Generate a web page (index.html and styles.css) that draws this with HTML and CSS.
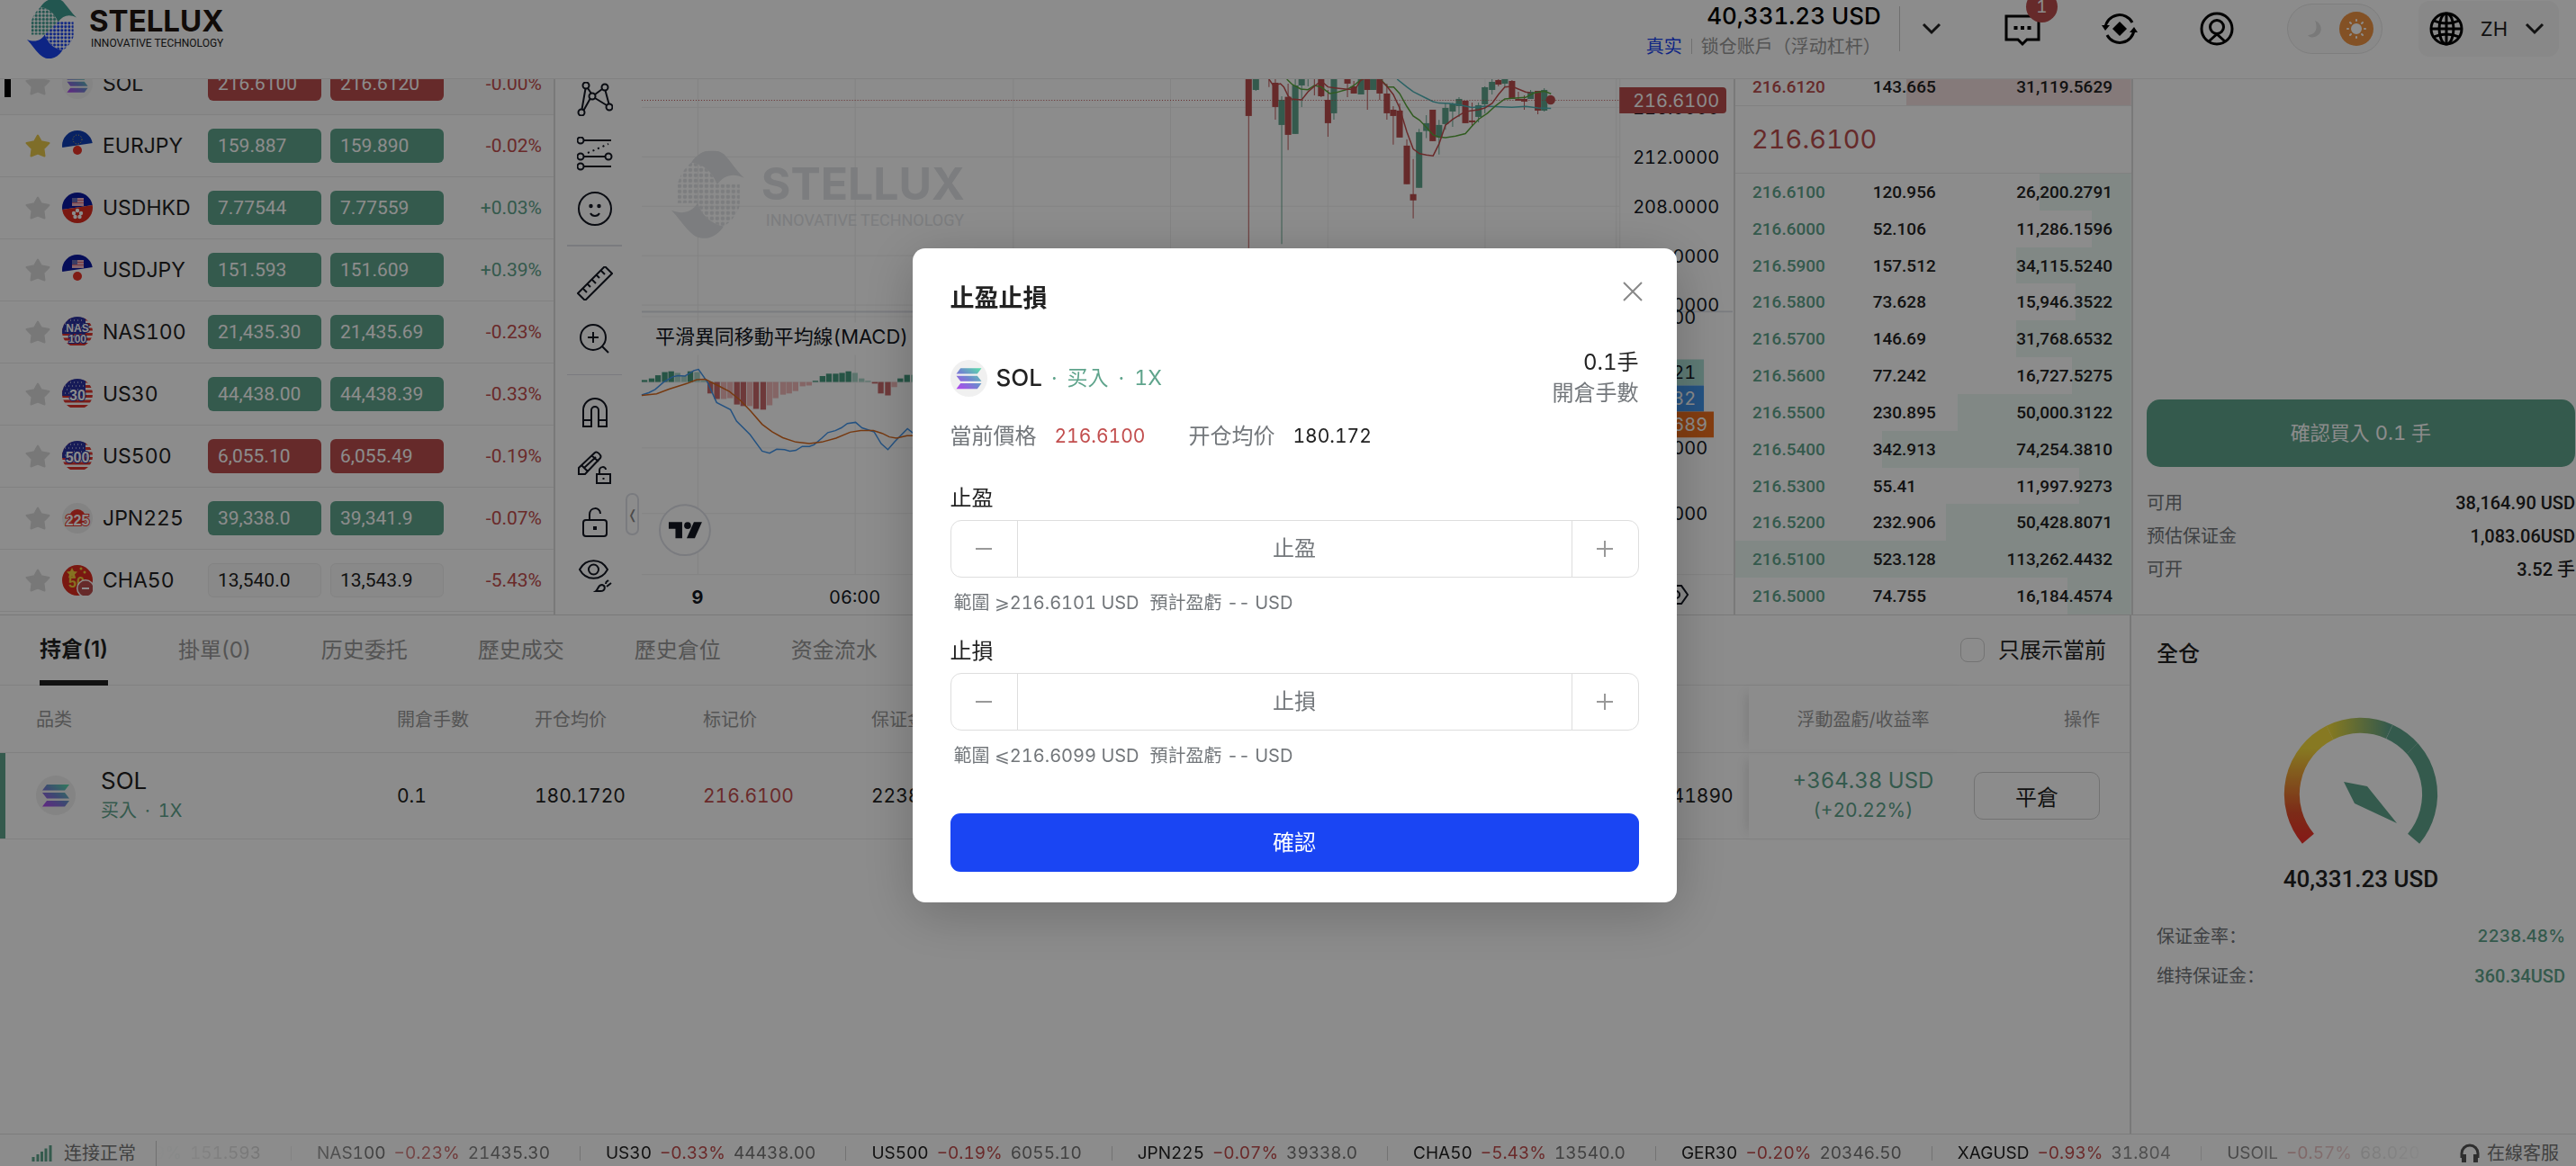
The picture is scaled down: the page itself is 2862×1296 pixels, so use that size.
FILE: index.html
```html
<!DOCTYPE html>
<html lang="zh-TW">
<head>
  <meta charset="UTF-8" />
  <meta name="viewport" content="width=device-width, initial-scale=1.0"/>
  <title>Stellux</title>
  <link rel="stylesheet" href="styles.css">
</head>
<body>

  <!-- Shared icons -->
  <svg class="sprite" aria-hidden="true">
    <defs>
      <linearGradient id="solGradient" x1="0" y1="1" x2="1" y2="0">
        <stop offset="0" stop-color="#b443f0"/>
        <stop offset="0.5" stop-color="#6f86cf"/>
        <stop offset="1" stop-color="#58e0a8"/>
      </linearGradient>
      <pattern id="dots" width="6" height="6" patternUnits="userSpaceOnUse">
        <circle cx="3" cy="3" r="2.300" fill="#fff"/>
      </pattern>
      <mask id="dotMask" maskUnits="userSpaceOnUse" x="0" y="0" width="81" height="97">
        <path d="M0 0h81v97H0z" fill="url(#dots)"/>
      </mask>
      <clipPath id="round"><circle cx="17" cy="17" r="17"/></clipPath>
    </defs>
    <symbol id="logo" viewBox="0 0 81 97">
      <g class="logo-top">
        <path d="M22 13C32-3 50-4 59 4c8 9 14 19 22 26-13-6-22-3-30 7C46 25 36 14 22 13z"/>
        <path d="M22 13c14 1 24 12 29 24L29 58H7V36c3-10 8-17 15-23z" mask="url(#dotMask)"/>
      </g>
      <g class="logo-bottom">
        <path d="M0 66c13 5 23 2 29-8 5 14 15 23 29 26-9 14-24 17-34 9C15 86 8 74 0 66z"/>
        <path d="M58 84C44 81 34 72 29 58l22-21h25v24c-3 10-10 18-18 23z" mask="url(#dotMask)"/>
      </g>
    </symbol>
    <symbol id="star" viewBox="0 0 28 26">
      <path d="M14 1.500 17.800 8.300 26.500 10 20.400 16.200 21.500 24.500 14 21.500 6.500 24.500 7.600 16.200 1.500 10 10.200 8.300Z" fill="currentColor" stroke="currentColor" stroke-width="2" stroke-linejoin="round"/>
    </symbol>
    <symbol id="sol" viewBox="0 0 44 44">
      <circle cx="22" cy="22" r="22" fill="#f0f0f0"/>
      <path d="M12 10h25l-5 6.500H7zM7 19h25l5 6.500H12zM12 28h25l-5 6.500H7z" fill="url(#solGradient)"/>
    </symbol>
    <symbol id="usa" viewBox="0 0 34 34">
      <g clip-path="url(#round)">
        <path d="M0 0h34v34H0z" fill="#fff"/>
        <path d="M0 3h34M0 8.500h34M0 14h34M0 19.500h34M0 25h34M0 30.500h34" stroke="#e0352f" stroke-width="2.800"/>
        <path d="M0 0h26v19H0z" fill="#2a32a0"/>
        <path d="M5 4h20M3 8h22M5 12h20M3 16h22" stroke="#fff" stroke-width="1" stroke-dasharray="1 3"/>
      </g>
    </symbol>
    <symbol id="chevron" viewBox="0 0 22 14">
      <path d="M2 2l9 9 9-9" fill="none" stroke="currentColor" stroke-width="3"/>
    </symbol>
  </svg>

  <div class="app">

    <header class="header">
      <a class="brand" href="#">
        <svg class="brand-logo"><use href="#logo"/></svg>
        <span class="brand-text">
          <span class="brand-name">STELLUX</span>
          <span class="brand-tag">INNOVATIVE TECHNOLOGY</span>
        </span>
      </a>

      <div class="account">
        <div class="account-total">40,331.23 USD</div>
        <div class="account-type"><span class="real">真实</span><i></i><span>锁仓账户（浮动杠杆）</span></div>
      </div>
      <button class="account-toggle" aria-label="切換帳戶"><svg width="22" height="14"><use href="#chevron"/></svg></button>

      <button class="icon-btn message-btn" aria-label="訊息">
        <svg width="40" height="36" viewBox="0 0 40 36" fill="none" stroke="#000" stroke-width="3"><path d="M2 2h36v26H25l-5 5-5-5H2z"/><path d="M10.500 15h4M18 15h4M25.500 15h4" stroke-width="4"/></svg>
        <span class="badge">1</span>
      </button>
      <button class="icon-btn" aria-label="兌換">
        <svg width="40" height="40" viewBox="0 0 40 40" fill="none" stroke="#000" stroke-width="3"><path d="M4 19A16 16 0 0 1 34 13M36 21A16 16 0 0 1 6 27"/><path d="M0 16h9l-5 6zM40 24h-9l5-6zM20 12l8 8-8 8-8-8z" fill="#000" stroke="none"/></svg>
      </button>
      <button class="icon-btn" aria-label="個人中心">
        <svg width="40" height="40" viewBox="0 0 40 40" fill="none" stroke="#000" stroke-width="3"><circle cx="20" cy="20" r="17"/><circle cx="20" cy="18" r="7.500"/><path d="M11 34l9-8 9 8"/></svg>
      </button>
      <button class="theme-switch" aria-label="主題">
        <svg class="moon" width="18" height="20" viewBox="0 0 18 20"><path d="M9 1c8 3 10 14 0 18-4 1-7 0-8-2 8 0 12-7 8-16z" fill="#dcdcdc"/></svg>
        <span class="sun"><svg width="24" height="24" viewBox="0 0 24 24" stroke="#fff" stroke-width="2" stroke-linecap="round"><circle cx="12" cy="12" r="5" fill="#fff"/><path d="M12 2v1M12 21v1M2 12h1M21 12h1M5 5l1 1M18 18l1 1M19 5l-1 1M6 18l-1 1"/></svg></span>
      </button>
      <button class="lang">
        <svg width="38" height="38" viewBox="0 0 38 38" fill="none" stroke="#000" stroke-width="3"><circle cx="19" cy="19" r="17"/><ellipse cx="19" cy="19" rx="8" ry="17"/><path d="M2 19h34M5 10c9 4 19 4 28 0M5 28c9-4 19-4 28 0M19 2v34"/></svg>
        ZH
        <svg width="22" height="14"><use href="#chevron"/></svg>
      </button>
    </header>

    <main class="workspace">

      <!-- Watch list -->
      <section class="watchlist">
        <table>
          <colgroup><col class="w-symbol"><col class="w-price"><col class="w-price"><col></colgroup>
          <tbody>
            <tr class="selected">
              <td><div class="symbol"><svg class="star"><use href="#star"/></svg><svg class="flag"><use href="#sol"/></svg>SOL</div></td>
              <td><span class="price down">216.6100</span></td><td><span class="price down">216.6120</span></td><td class="change red">-0.00%</td>
            </tr>
            <tr>
              <td><div class="symbol"><svg class="star on"><use href="#star"/></svg><svg class="flag" viewBox="0 0 34 34"><g clip-path="url(#round)"><path d="M0 0h34v14L0 19z" fill="#103fb5"/><circle cx="17" cy="10" r="5" fill="none" stroke="#e8c440" stroke-width="1" stroke-dasharray="1 2"/><circle cx="17" cy="22" r="5" fill="#e93427"/></g></svg>EURJPY</div></td>
              <td><span class="price up">159.887</span></td><td><span class="price up">159.890</span></td><td class="change red">-0.02%</td>
            </tr>
            <tr>
              <td><div class="symbol"><svg class="star"><use href="#star"/></svg><svg class="flag" viewBox="0 0 34 34"><g clip-path="url(#round)"><path d="M0 0h34v14L0 19z" fill="#0a18a0"/><path d="M0 19l34-5v20H0z" fill="#de2d20"/><path d="M11 6h13v9H11z" fill="#f3b9c6"/><path d="M11 8.500h13M11 11.500h13" stroke="#e06a78" stroke-width="1"/><path d="M11 6h6v5h-6z" fill="#6a6fb8"/><g fill="#fff"><circle cx="17" cy="20" r="2.200"/><circle cx="21" cy="23" r="2.200"/><circle cx="19.500" cy="27" r="2.200"/><circle cx="14.500" cy="27" r="2.200"/><circle cx="13" cy="23" r="2.200"/></g></g></svg>USDHKD</div></td>
              <td><span class="price up">7.77544</span></td><td><span class="price up">7.77559</span></td><td class="change green">+0.03%</td>
            </tr>
            <tr>
              <td><div class="symbol"><svg class="star"><use href="#star"/></svg><svg class="flag" viewBox="0 0 34 34"><g clip-path="url(#round)"><path d="M0 0h34v14L0 19z" fill="#0a18a0"/><path d="M11 6h13v9H11z" fill="#f3b9c6"/><path d="M11 8.500h13M11 11.500h13" stroke="#e06a78" stroke-width="1"/><path d="M11 6h6v5h-6z" fill="#6a6fb8"/><circle cx="17" cy="24" r="5" fill="#e93427"/></g></svg>USDJPY</div></td>
              <td><span class="price up">151.593</span></td><td><span class="price up">151.609</span></td><td class="change green">+0.39%</td>
            </tr>
            <tr>
              <td><div class="symbol"><svg class="star"><use href="#star"/></svg><svg class="flag" viewBox="0 0 34 34"><use href="#usa"/><g class="flag-text"><text x="17" y="17">NAS</text><text x="17" y="29">100</text></g></svg>NAS100</div></td>
              <td><span class="price up">21,435.30</span></td><td><span class="price up">21,435.69</span></td><td class="change red">-0.23%</td>
            </tr>
            <tr>
              <td><div class="symbol"><svg class="star"><use href="#star"/></svg><svg class="flag" viewBox="0 0 34 34"><use href="#usa"/><g class="flag-text big"><text x="17" y="24">30</text></g></svg>US30</div></td>
              <td><span class="price up">44,438.00</span></td><td><span class="price up">44,438.39</span></td><td class="change red">-0.33%</td>
            </tr>
            <tr>
              <td><div class="symbol"><svg class="star"><use href="#star"/></svg><svg class="flag" viewBox="0 0 34 34"><use href="#usa"/><g class="flag-text big"><text x="17" y="24">500</text></g></svg>US500</div></td>
              <td><span class="price down">6,055.10</span></td><td><span class="price down">6,055.49</span></td><td class="change red">-0.19%</td>
            </tr>
            <tr>
              <td><div class="symbol"><svg class="star"><use href="#star"/></svg><svg class="flag" viewBox="0 0 34 34"><circle cx="17" cy="17" r="17" fill="#efefef"/><circle cx="17" cy="16" r="9" fill="#e8352a"/><g class="flag-text big jpn"><text x="17" y="25">225</text></g></svg>JPN225</div></td>
              <td><span class="price up">39,338.0</span></td><td><span class="price up">39,341.9</span></td><td class="change red">-0.07%</td>
            </tr>
            <tr>
              <td><div class="symbol"><svg class="star"><use href="#star"/></svg><svg class="flag" viewBox="0 0 34 34"><circle cx="17" cy="17" r="17" fill="#de2d20"/><path d="M11 3l2 4 4 .5-3 3 1 4-4-2-4 2 1-4-3-3 4-.5z" fill="#f5d03c"/><g fill="#f5d03c"><circle cx="21" cy="4" r="1.500"/><circle cx="25" cy="8" r="1.500"/></g><g class="flag-text big chn"><text x="16" y="25">50</text></g><circle cx="26" cy="26" r="10" fill="#fff"/><circle cx="26" cy="26" r="8.500" fill="#ba4e4e"/><path d="M22 26h8" stroke="#fff" stroke-width="2"/></svg>CHA50</div></td>
              <td><span class="price flat">13,540.0</span></td><td><span class="price flat">13,543.9</span></td><td class="change red">-5.43%</td>
            </tr>
          </tbody>
        </table>
      </section>

      <!-- Chart -->
      <section class="chart">
        <div class="toolbar">
          <button aria-label="形態"><svg viewBox="0 0 40 38"><circle cx="10" cy="4" r="3.500"/><circle cx="31" cy="6" r="3.500"/><circle cx="17" cy="16" r="3.500"/><circle cx="5" cy="34" r="3.500"/><circle cx="36" cy="28" r="3.500"/><path d="M9.500 7.500 5.500 30.500M12 7l4 6M28 8l-8 6M31.500 9.500 35.500 24.500M20 18l13 8M14.500 19 7.500 31.500"/></svg></button>
          <button aria-label="斐波那契"><svg viewBox="0 0 40 38"><circle cx="4" cy="4" r="3.500"/><circle cx="4" cy="22" r="3.500"/><circle cx="35" cy="22" r="3.500"/><circle cx="4" cy="33" r="3.500"/><path d="M8 4h30M8 22h23M8 33h30"/><path d="M12 18 35 8" stroke-dasharray="2 4"/></svg></button>
          <button aria-label="表情"><svg viewBox="0 0 40 38"><circle cx="20" cy="19" r="18"/><path d="M15 24c2 4 8 4 10 0"/><circle cx="15.500" cy="16" r="1.200"/><circle cx="24.500" cy="16" r="1.200"/></svg></button>
          <hr>
          <button aria-label="測量"><svg viewBox="0 0 40 38"><path d="M1 30 31 0l8 8L9 38zM7 25l4 4M12 20l3 3M17 15l4 4M22 10l3 3M27 5l4 4"/></svg></button>
          <button aria-label="放大"><svg viewBox="0 0 40 38"><circle cx="18" cy="18" r="14"/><path d="M18 12v12M12 18h12M28 28l7 7"/></svg></button>
          <hr class="thin">
          <button aria-label="磁鐵"><svg viewBox="0 0 40 38"><path d="M7 35V17a13 13 0 0 1 26 0v18h-9V17a4 4 0 0 0-8 0v18zM7 28h9M24 28h9"/></svg></button>
          <button aria-label="鎖定繪圖"><svg viewBox="0 0 40 38"><path d="M2 20 20 3c2-2 8 3 6 6L9 27H2zM5 17l7 7M16 6l8 7M8 20 21 8M22 27h15v10H22zM25 27v-4c0-5 7-5 7-1M29.500 31v2"/></svg></button>
          <button aria-label="鎖定"><svg viewBox="0 0 40 38"><rect x="7" y="17" width="26" height="18" rx="3"/><path d="M14 17v-6c0-9 12-9 12-1"/><path d="M20 24v4" stroke-width="4"/></svg></button>
          <button aria-label="隱藏"><svg viewBox="0 0 40 38"><path d="M3 11C10-2 27-2 34 11 27 24 10 24 3 11z"/><circle cx="18.500" cy="11" r="5.500"/><path d="M21 35c3-2 2-7 7-7 4 1 4 7-2 7zM33 30l5-4M32 27c0-3 2-3 3-4" /></svg></button>
        </div>
        <button class="collapse" aria-label="收起">❬</button>

        <svg class="plot" viewBox="712 88 1214 596">
          <g class="grid">
            <path d="M774.500 88V639M949.500 88V639M1125.500 88V639M1300.500 88V639M1475.500 88V639M1650.500 88V639M1796.500 88V639"/>
            <path d="M712 119.500H1800M712 174.500H1800M712 229.500H1800M712 284.500H1800M712 339.500H1800M712 352.500H1800M712 425.500H1800M712 498.500H1800M712 571.500H1800M712 639.500H1926M1800.500 88V684"/>
          </g>
          <path d="M712 347H1926" stroke="#dfe1e8" stroke-width="2"/>

          <g class="watermark">
            <use href="#logo" x="745" y="168" width="81" height="97"/>
            <text x="845" y="222" class="wm-name">STELLUX</text>
            <text x="850" y="251" class="wm-tag">INNOVATIVE TECHNOLOGY</text>
          </g>

          <g id="candles" transform="translate(1200 0) scale(0.472 0.3333)"></g>
          <path d="M712 111.500H1800" stroke="#ba4e4e" stroke-dasharray="1 2"/>

          <path d="M725 359h285v36H725z" fill="#fff"/>
          <text x="727" y="383" class="study">平滑異同移動平均線(MACD)</text>
          <g id="macd" transform="translate(600 0) scale(0.3954 0.4401)"></g>

          <g class="tv">
            <circle cx="760" cy="590" r="28" fill="#fff" stroke="#dfe1e8" stroke-width="2"/>
            <path d="M742 581h15v18h-7.500v-10.500H742zM770 581h9l-8 18h-9z" fill="#131722"/>
            <circle cx="763" cy="585" r="3.800" fill="#131722"/>
          </g>

          <g>
            <text x="1815" y="127">216.0000</text>
            <text x="1815" y="182">212.0000</text>
            <text x="1815" y="237">208.0000</text>
            <text x="1815" y="292">204.0000</text>
            <text x="1815" y="346">200.0000</text>
            <path d="M1801 348h125v2h-125z" fill="#fff"/>
            <text x="1815" y="360">2.0000</text>
            <text x="1815" y="506">−2.0000</text>
            <text x="1815" y="579">−4.0000</text>
            <path d="M1800 97h115a4 4 0 0 1 4 4v21a4 4 0 0 1-4 4h-115z" fill="#ba4e4e"/>
            <text x="1815" y="119" class="light">216.6100</text>
            <path d="M1800 400h94v29h-94z" fill="#ace0d6"/>
            <text x="1815" y="422">0.2521</text>
            <path d="M1800 429h94v29h-94z" fill="#4396ec"/>
            <text x="1815" y="451" class="light">0.8632</text>
            <path d="M1800 458h105v29h-105z" fill="#f0701e"/>
            <text x="1815" y="480" class="light">−0.7689</text>
            <path d="M1857 652h12l7 10-7 10h-12l-7-10z" fill="none" stroke="#131722" stroke-width="2"/>
            <circle cx="1863" cy="662" r="4" fill="none" stroke="#131722" stroke-width="2"/>
          </g>
          <text x="774" y="672" class="mid strong">9</text>
          <text x="949" y="672" class="mid">06:00</text>
        </svg>
      </section>

      <!-- Order book -->
      <section class="book">
        <table class="asks"><tbody>
          <tr style="--depth:57%"><td>216.6120</td><td>143.665</td><td>31,119.5629</td></tr>
        </tbody></table>
        <div class="last-price">216.6100</div>
        <table class="bids"><tbody>
          <tr style="--depth:23%"><td>216.6100</td><td>120.956</td><td>26,200.2791</td></tr>
          <tr style="--depth:10%"><td>216.6000</td><td>52.106</td><td>11,286.1596</td></tr>
          <tr style="--depth:29%"><td>216.5900</td><td>157.512</td><td>34,115.5240</td></tr>
          <tr style="--depth:14%"><td>216.5800</td><td>73.628</td><td>15,946.3522</td></tr>
          <tr style="--depth:29%"><td>216.5700</td><td>146.69</td><td>31,768.6532</td></tr>
          <tr style="--depth:15%"><td>216.5600</td><td>77.242</td><td>16,727.5275</td></tr>
          <tr style="--depth:44%"><td>216.5500</td><td>230.895</td><td>50,000.3122</td></tr>
          <tr style="--depth:63%"><td>216.5400</td><td>342.913</td><td>74,254.3810</td></tr>
          <tr style="--depth:13%"><td>216.5300</td><td>55.41</td><td>11,997.9273</td></tr>
          <tr style="--depth:47%"><td>216.5200</td><td>232.906</td><td>50,428.8071</td></tr>
          <tr style="--depth:100%"><td>216.5100</td><td>523.128</td><td>113,262.4432</td></tr>
          <tr style="--depth:16%"><td>216.5000</td><td>74.755</td><td>16,184.4574</td></tr>
        </tbody></table>
      </section>

      <!-- Order form -->
      <section class="order">
        <button class="buy-btn">確認買入 0.1 手</button>
        <dl lang="zh-CN">
          <div><dt>可用</dt><dd>38,164.90 USD</dd></div>
          <div><dt>预估保证金</dt><dd>1,083.06USD</dd></div>
          <div><dt>可开</dt><dd>3.52 手</dd></div>
        </dl>
      </section>
    </main>

    <div class="bottom">
      <section class="positions">
        <nav class="tabs">
          <a class="active" href="#">持倉(1)</a>
          <a href="#">掛單(0)</a>
          <a href="#">历史委托</a>
          <a href="#">歷史成交</a>
          <a href="#">歷史倉位</a>
          <a href="#">资金流水</a>
          <label class="only-current"><input type="checkbox">只展示當前</label>
        </nav>
        <table>
          <colgroup><col class="p-name"><col class="p-lots"><col class="p-num"><col class="p-num"><col><col class="p-id"><col class="p-pnl"><col class="p-action"></colgroup>
          <thead>
            <tr><th>品类</th><th>開倉手數</th><th>开仓均价</th><th>标记价</th><th>保证金率</th><th>訂單號</th><th class="pnl">浮動盈虧/收益率</th><th class="action">操作</th></tr>
          </thead>
          <tbody>
            <tr>
              <td><div class="position"><svg width="44" height="44"><use href="#sol"/></svg><div><b>SOL</b><small class="side green"><span>买入</span><span>·</span><span>1X</span></small></div></div></td>
              <td>0.1</td>
              <td>180.1720</td>
              <td class="red">216.6100</td>
              <td>2238.48%</td>
              <td>20250209141890</td>
              <td class="pnl green"><b>+364.38 USD</b><small>(+20.22%)</small></td>
              <td class="action"><button>平倉</button></td>
            </tr>
          </tbody>
        </table>
      </section>

      <section class="margin">
        <h2>全仓</h2>
        <svg class="gauge" viewBox="0 0 180 150">
          <defs>
            <linearGradient id="gaugeLow" x1="0" y1="1" x2="0" y2="0"><stop offset="0" stop-color="#f0322a"/><stop offset="0.25" stop-color="#e2502c"/><stop offset="0.85" stop-color="#f6dc3e"/></linearGradient>
            <linearGradient id="gaugeMid"><stop offset="0" stop-color="#f1dc3d"/><stop offset="1" stop-color="#5fa48c"/></linearGradient>
          </defs>
          <g fill="none" stroke-width="17">
            <path d="M31.400 139.200A76.500 76.500 0 0 1 55.600 21.400" stroke="url(#gaugeLow)"/>
            <path d="M55.600 21.400A76.500 76.500 0 0 1 121.600 20.200" stroke="url(#gaugeMid)"/>
            <path d="M121.600 20.200A76.500 76.500 0 0 1 148.600 139.200" stroke="#5fa48c"/>
            <path d="M118 28l8-16M142 44l12-12" stroke="#fff" stroke-width="1" opacity="0.2"/>
          </g>
          <path d="M71 76l26 5 33 41-47-22z" fill="#5fa48c"/>
        </svg>
        <div class="equity">40,331.23 USD</div>
        <dl lang="zh-CN">
          <div><dt>保证金率：</dt><dd class="rate">2238.48%</dd></div>
          <div><dt>维持保证金：</dt><dd>360.34USD</dd></div>
        </dl>
      </section>
    </div>

    <footer class="footer">
      <div class="status">
        <svg width="23" height="18" viewBox="0 0 23 18"><path d="M2 18v-5M7 18v-8M11.500 18V7M16 18V3.500M21 18V0" stroke="#5fa48c" stroke-width="3"/></svg>
        连接正常
      </div>
      <div class="ticker">
        <ul>
          <li><b>USDJPY</b><em class="up">+0.39%</em><span>151.593</span></li>
          <li><b>NAS100</b><em>−0.23%</em><span>21435.30</span></li>
          <li><b>US30</b><em>−0.33%</em><span>44438.00</span></li>
          <li><b>US500</b><em>−0.19%</em><span>6055.10</span></li>
          <li><b>JPN225</b><em>−0.07%</em><span>39338.0</span></li>
          <li><b>CHA50</b><em>−5.43%</em><span>13540.0</span></li>
          <li><b>GER30</b><em>−0.20%</em><span>20346.50</span></li>
          <li><b>XAGUSD</b><em>−0.93%</em><span>31.804</span></li>
          <li><b>USOIL</b><em>−0.57%</em><span>68.020</span></li>
        </ul>
      </div>
      <a class="service" href="#">
        <svg width="24" height="22" viewBox="0 0 24 22" fill="none" stroke="#555" stroke-width="3"><path d="M3 16v-5a9 9 0 0 1 18 0v5"/><path d="M5.500 12v9M18.500 12v9" stroke-width="5"/></svg>
        在線客服
      </a>
    </footer>
  </div>

  <!-- Take profit / stop loss -->
  <div class="overlay">
    <form class="modal" role="dialog" aria-labelledby="modalTitle">
      <div class="modal-head">
        <h1 id="modalTitle">止盈止損</h1>
        <button type="button" class="close" aria-label="關閉"><svg width="22" height="22" viewBox="0 0 22 22"><path d="M1 1l20 20M21 1L1 21" stroke="#888" stroke-width="2"/></svg></button>
      </div>
      <div class="modal-symbol">
        <svg width="41" height="41"><use href="#sol"/></svg>
        <b>SOL</b>
        <div class="side green"><span>·</span><span>买入</span><span>·</span><span>1X</span></div>
        <div class="lots"><span>0.1手</span><span class="muted">開倉手數</span></div>
      </div>
      <div class="modal-prices">
        <span class="muted">當前價格</span><span class="red">216.6100</span>
        <span class="muted second">开仓均价</span><span>180.172</span>
      </div>

      <label for="takeProfit">止盈</label>
      <div class="stepper">
        <button type="button" aria-label="減少"><svg width="18" height="18"><path d="M0 9h18" stroke="#999" stroke-width="2"/></svg></button>
        <input type="text" id="takeProfit" placeholder="止盈">
        <button type="button" aria-label="增加"><svg width="18" height="18"><path d="M0 9h18M9 0v18" stroke="#999" stroke-width="2"/></svg></button>
      </div>
      <p class="hint"><span>範圍 ⩾216.6101 USD</span><span>預計盈虧 -- USD</span></p>

      <label for="stopLoss">止損</label>
      <div class="stepper">
        <button type="button" aria-label="減少"><svg width="18" height="18"><path d="M0 9h18" stroke="#999" stroke-width="2"/></svg></button>
        <input type="text" id="stopLoss" placeholder="止損">
        <button type="button" aria-label="增加"><svg width="18" height="18"><path d="M0 9h18M9 0v18" stroke="#999" stroke-width="2"/></svg></button>
      </div>
      <p class="hint"><span>範圍 ⩽216.6099 USD</span><span>預計盈虧 -- USD</span></p>

      <button type="button" class="confirm">確認</button>
    </form>
  </div>

  <script src="script.js"></script>
</body>
</html>
```
FILE: styles.css
```css
* {
  margin: 0;
  padding: 0;
  box-sizing: border-box;
}

body {
  font-family: Inter, 'Noto Sans CJK SC', sans-serif;
  font-size: 22px;
  font-variant-numeric: tabular-nums;
  color: #222;
  background: #fff;
  overflow: hidden;
}

button,
input {
  font: inherit;
  color: inherit;
  background: none;
  border: none;
}

button {
  cursor: pointer;
}

a {
  color: inherit;
  text-decoration: none;
}

table {
  border-collapse: collapse;
  table-layout: fixed;
  width: 100%;
}

.sprite {
  position: absolute;
  width: 0;
  height: 0;
}

.red {
  color: #c24e4e;
}

.green {
  color: #5fa48c;
}

.muted {
  color: #73777b;
}

.app {
  display: flex;
  flex-direction: column;
  height: 100vh;
}

/* Header */

.header {
  display: flex;
  align-items: center;
  flex: none;
  height: 88px;
  padding: 0 19px 24px 30px;
  border-bottom: 1px solid #ececec;
}

.brand {
  display: flex;
  align-items: center;
  gap: 14px;
  margin-right: auto;
}

.brand-logo {
  width: 55px;
  height: 66px;
}

.logo-top {
  fill: var(--logo-top, #3f9d92);
}

.logo-bottom {
  fill: var(--logo-bottom, #1a44f0);
}

.brand-text {
  display: flex;
  flex-direction: column;
}

.brand-name {
  font-size: 33px;
  font-weight: 700;
  line-height: 32px;
  color: #201410;
}

.brand-tag {
  padding-left: 2px;
  font-family: Roboto, sans-serif;
  font-size: 12px;
  line-height: 18px;
}

.account {
  padding-top: 6px;
  text-align: right;
}

.account-total {
  font-size: 26px;
  font-weight: 500;
  line-height: 34px;
  color: #000;
}

.account-type {
  display: flex;
  align-items: center;
  justify-content: flex-end;
  font-size: 20px;
  line-height: 34px;
  color: #999;
}

.account-type i {
  width: 1px;
  height: 17px;
  margin: 0 10px;
  background: #ccc;
}

.account-type .real {
  color: #1a44f0;
}

.account-toggle {
  display: flex;
  margin: 0 70px 0 20px;
  padding: 18px 0 18px 24px;
  border-left: 1px solid #ccc;
}

.icon-btn {
  position: relative;
  display: flex;
  margin-right: 68px;
}

.message-btn {
  margin-top: 4px;
}

.badge {
  position: absolute;
  top: -26px;
  right: -19px;
  width: 35px;
  height: 35px;
  border-radius: 50%;
  background: #ba4e4e;
  color: #fff;
  font-size: 19px;
  line-height: 35px;
}

.theme-switch {
  display: flex;
  align-items: center;
  justify-content: space-between;
  width: 106px;
  height: 56px;
  margin: 0 40px 0 -10px;
  padding: 0 9px 0 21px;
  border: 1px solid #e6e6e6;
  border-radius: 28px;
  background: #fafafa;
}

.sun {
  display: flex;
  align-items: center;
  justify-content: center;
  width: 38px;
  height: 38px;
  border-radius: 50%;
  background: #ee9444;
}

.lang {
  display: flex;
  align-items: center;
  gap: 19px;
  height: 62px;
  padding: 0 16px 0 12px;
  border-radius: 12px;
  background: #f7f7f7;
}

/* Workspace */

.workspace {
  display: grid;
  grid-template-columns: 617px minmax(0, 1fr) 444px 492px;
  flex: none;
  height: 596px;
  border-bottom: 1px solid #dcdcdc;
}

.watchlist {
  display: flex;
  flex-direction: column;
  justify-content: flex-end;
  padding-bottom: 3px;
  overflow: hidden;
  border-right: 2px solid #dcdcdc;
}

.w-symbol {
  width: 231px;
}

.w-price {
  width: 136px;
}

.watchlist tr {
  height: 69px;
  border-bottom: 1px solid #ebebeb;
}

.watchlist .selected {
  background: #f9f9f9;
}

.watchlist .selected td:first-child {
  background: linear-gradient(90deg, #fff 5px, #000 5px, #000 12px, transparent 12px) 0 0 / 100% 49px no-repeat;
}

.symbol {
  display: flex;
  align-items: center;
  gap: 11px;
  padding-left: 28px;
  font-size: 23px;
  white-space: nowrap;
}

.star {
  width: 28px;
  height: 26px;
  margin-right: 2px;
  color: #dadada;
}

.star.on {
  color: #e8c84c;
}

.flag {
  width: 34px;
  height: 34px;
  flex: none;
}

.flag-text {
  font-size: 12px;
  font-weight: 700;
  font-family: 'Liberation Sans', sans-serif;
  text-anchor: middle;
  fill: #fff;
  stroke: #2a32a0;
  stroke-width: 2px;
  paint-order: stroke;
}

.flag-text.big {
  font-size: 16px;
}

.flag-text.jpn {
  stroke: #e8352a;
}

.flag-text.chn {
  fill: #f5d03c;
  stroke: none;
}

.price {
  display: block;
  width: 126px;
  height: 38px;
  padding-left: 10px;
  border: 1px solid transparent;
  border-radius: 6px;
  color: #fff;
  font-family: Roboto, sans-serif;
  font-size: 21px;
  line-height: 36px;
}

.price.up {
  background: #5fa48c;
}

.price.down {
  background: #ba4e4e;
}

.price.flat {
  border-color: #efefef;
  background: #fafafa;
  color: #222;
}

.change {
  padding-right: 13px;
  font-family: Roboto, sans-serif;
  font-size: 21px;
  text-align: right;
}

/* Chart */

.chart {
  position: relative;
  display: flex;
  min-width: 0;
  overflow: hidden;
}

.toolbar {
  display: flex;
  flex-direction: column;
  align-items: center;
  justify-content: flex-end;
  flex: none;
  width: 95px;
  padding: 0 8px 12px 0;
}

.toolbar button {
  display: flex;
  align-items: center;
  flex: none;
  height: 61px;
}

.toolbar svg {
  width: 40px;
  height: 38px;
  fill: none;
  stroke: #131722;
  stroke-width: 2;
}

.toolbar hr {
  flex: none;
  width: 61px;
  height: 2px;
  margin: 10px 0;
  border: none;
  background: #dfe1e8;
}

.toolbar .thin {
  height: 1px;
}

.collapse {
  position: absolute;
  left: 78px;
  top: 460px;
  width: 15px;
  height: 47px;
  border: 2px solid #dfe1e8;
  border-radius: 7px;
  color: #888;
  font-size: 14px;
}

.plot {
  flex: 1;
  min-width: 0;
  font-size: 20px;
  fill: #131722;
}

.plot .study {
  font-size: 22px;
}

.plot .grid {
  fill: none;
  stroke: #efefef;
}

.plot .light {
  fill: #fff;
}

.plot .mid {
  text-anchor: middle;
}

.plot .strong {
  font-weight: 700;
}

.watermark {
  --logo-top: #e2e4e7;
  --logo-bottom: #e2e4e7;
  fill: #e2e4e7;
}

.wm-name {
  font-size: 50px;
  font-weight: 700;
}

.wm-tag {
  font-family: Roboto, sans-serif;
  font-size: 18px;
}

/* Order book */

.book {
  display: flex;
  flex-direction: column;
  overflow: hidden;
  border-left: 2px solid #dcdcdc;
  border-right: 2px solid #dcdcdc;
  font-family: Roboto, sans-serif;
  font-size: 19px;
  font-weight: 500;
}

.book tr {
  background: linear-gradient(to left, var(--tint) var(--depth), transparent 0);
}

.book td {
  padding-left: 19px;
  line-height: 17px;
}

.book td:nth-child(2) {
  padding-left: 6px;
}

.book td:last-child {
  padding-left: 0;
  padding-right: 21px;
  text-align: right;
}

.asks {
  --tint: #f3dfdf;
}

.asks td {
  padding-bottom: 12px;
}

.asks td:first-child {
  color: #ba4e4e;
}

.last-price {
  flex: none;
  height: 76px;
  padding-left: 18px;
  border: solid #ebebeb;
  border-width: 1px 0;
  font-family: Inter, sans-serif;
  font-size: 29px;
  font-weight: 400;
  line-height: 74px;
  color: #ba4e4e;
}

.bids {
  --tint: #ecf8f3;
  flex: 1;
}

.bids td:first-child {
  color: #5fa48c;
}

/* Order form */

.order {
  display: flex;
  flex-direction: column;
  justify-content: flex-end;
  padding: 0 1px 31px 15px;
}

.buy-btn {
  height: 75px;
  margin-bottom: 22px;
  padding-bottom: 5px;
  border-radius: 15px;
  background: #5fa48c;
  color: #fff;
}

dl div {
  display: flex;
  justify-content: space-between;
}

dt {
  color: #73777b;
}

.order dl {
  font-size: 20px;
  line-height: 37px;
}

.order dd {
  font-family: Roboto, 'Noto Sans CJK TC', sans-serif;
  font-weight: 500;
}

/* Positions */

.bottom {
  display: grid;
  grid-template-columns: minmax(0, 1fr) 496px;
  flex: 1;
  min-height: 0;
}

.tabs {
  display: flex;
  align-items: center;
  gap: 78px;
  height: 78px;
  padding: 0 26px 0 44px;
  border-bottom: 1px solid #ebebeb;
  font-size: 24px;
  font-variant-numeric: normal;
  line-height: 76px;
  color: #999;
}

.tabs .active {
  height: 78px;
  border-bottom: 6px solid #222;
  border-radius: 4px 4px 0 0;
  color: #222;
  font-weight: 600;
}

.only-current {
  display: flex;
  align-items: center;
  gap: 15px;
  margin-left: auto;
  color: #222;
}

.only-current input {
  appearance: none;
  width: 27px;
  height: 27px;
  border: 1px solid #d2d2d2;
  border-radius: 8px;
}

.p-name {
  width: 441px;
}

.p-lots {
  width: 153px;
}

.p-num {
  width: 187px;
}

.p-id {
  width: 208px;
}

.p-pnl {
  width: 248px;
}

.p-action {
  width: 175px;
}

.positions tr {
  border-bottom: 1px solid #ebebeb;
}

.positions th {
  height: 74px;
  color: #999;
  font-size: 20px;
  font-weight: 400;
  text-align: left;
}

.positions th:first-child {
  padding-left: 40px;
}

.positions td {
  height: 96px;
  font-size: 21px;
}

.positions td:first-child {
  box-shadow: inset 6px 0 #5fa48c;
}

.positions .pnl {
  padding-left: 6px;
  text-align: center;
  box-shadow: -10px 0 12px -8px rgba(0, 0, 0, 0.12);
}

.positions .action {
  padding-right: 33px;
  text-align: right;
}

.action button {
  width: 140px;
  height: 53px;
  border: 1px solid #cfcfcf;
  border-radius: 10px;
  font-size: 24px;
}

.position {
  display: flex;
  align-items: center;
  gap: 28px;
  padding-left: 40px;
}

.positions b,
.positions small {
  display: block;
  font-weight: 400;
}

.position b {
  font-size: 26px;
  line-height: 34px;
}

.side {
  display: flex;
  gap: 11px;
}

.position .side {
  display: flex;
  gap: 9px;
  font-size: 20px;
  line-height: 32px;
}

.pnl b {
  font-size: 24px;
  line-height: 34px;
}

.pnl small {
  font-size: 21px;
  line-height: 32px;
}

/* Margin */

.margin {
  padding: 25px 12px 0 28px;
  border-left: 2px solid #dcdcdc;
}

.margin h2 {
  font-size: 24px;
  font-weight: 500;
  line-height: 36px;
}

.gauge {
  display: block;
  width: 180px;
  height: 150px;
  margin: 48px auto 17px;
}

.equity {
  font-family: Roboto, sans-serif;
  font-size: 26px;
  font-weight: 500;
  line-height: 34px;
  text-align: center;
}

.margin dl {
  margin-top: 25px;
  font-size: 20px;
  line-height: 44px;
}

.margin dd {
  font-family: Roboto, sans-serif;
  font-weight: 500;
  color: #5fa48c;
}

.margin .rate {
  font-family: Inter, sans-serif;
  font-size: 19px;
}

/* Footer */

.footer {
  display: flex;
  align-items: center;
  flex: none;
  height: 36px;
  padding: 7px 19px 0 35px;
  border-top: 1px solid #e2e2e2;
  font-size: 20px;
  line-height: 28px;
  color: #777;
}

.status,
.service {
  display: flex;
  align-items: center;
  flex: none;
  gap: 13px;
}

.status {
  padding-right: 22px;
  border-right: 1px solid #ccc;
}

.service {
  gap: 7px;
}

.ticker {
  flex: 1;
  display: flex;
  min-width: 0;
  margin-right: 23px;
  overflow: hidden;
  font-size: 19px;
  -webkit-mask-image: linear-gradient(90deg, transparent, #000 400px, #000 calc(100% - 400px), transparent);
  mask-image: linear-gradient(90deg, transparent, #000 400px, #000 calc(100% - 400px), transparent);
}

.ticker ul {
  display: flex;
  margin-left: -158px;
  list-style: none;
}

.ticker li {
  display: flex;
  align-items: center;
  gap: 9px;
  flex: none;
  padding-left: 28px;
}

.ticker li::after {
  content: '';
  width: 1px;
  height: 16px;
  margin-left: 24px;
  background: #d2d2d2;
}

.ticker b {
  font-weight: 400;
  color: #222;
}

.ticker em {
  font-style: normal;
  color: #c24e4e;
}

.ticker em.up {
  color: #5fa48c;
}

/* Modal */

.overlay {
  position: fixed;
  inset: 0;
  display: flex;
  align-items: center;
  justify-content: center;
  padding: 0 0 17px 14px;
  background: rgba(0, 0, 0, 0.45);
}

.modal {
  width: 849px;
  padding: 38px 42px 34px;
  border-radius: 14px;
  background: #fff;
  box-shadow: 0 12px 60px rgba(0, 0, 0, 0.22);
  line-height: 32px;
}

.modal-head {
  display: flex;
  justify-content: space-between;
  align-items: flex-start;
  margin-bottom: 36px;
}

.modal-head h1 {
  font-size: 27px;
  font-weight: 700;
  line-height: 36px;
}

.close {
  display: flex;
  margin: -1px -4px 0 0;
}

.modal-symbol {
  display: flex;
  align-items: center;
  gap: 10px;
  line-height: 34px;
}

.modal-symbol b {
  font-size: 26px;
  font-weight: 500;
}

.modal-symbol .side {
  font-size: 23px;
}

.lots {
  display: flex;
  flex-direction: column;
  margin-left: auto;
  font-size: 24px;
  text-align: right;
}

.modal-prices {
  display: flex;
  margin: 15px 0 37px;
  font-size: 21px;
}

.modal-prices .muted {
  margin-right: 20px;
  font-size: 24px;
}

.modal-prices .second {
  margin-left: 48px;
}

.modal label {
  display: block;
  margin-bottom: 8px;
  font-size: 24px;
}

.stepper {
  display: flex;
  height: 64px;
  border: 1px solid #dedede;
  border-radius: 12px;
}

.stepper button {
  display: flex;
  align-items: center;
  justify-content: center;
  width: 73px;
}

.stepper input {
  flex: 1;
  min-width: 0;
  border: solid #dedede;
  border-width: 0 1px;
  font-size: 24px;
  text-align: center;
}

.stepper input::placeholder {
  color: #73777b;
}

.hint {
  display: flex;
  gap: 12px;
  margin: 12px 0 22px;
  padding-left: 4px;
  font-size: 20px;
  color: #73777b;
}

.confirm {
  width: 100%;
  height: 65px;
  margin-top: 26px;
  border-radius: 11px;
  background: #1a45f3;
  color: #fff;
  font-size: 24px;
}
```
FILE: script.js
```js
// [x, body top, body bottom, wick top, wick bottom, rising]
const candles = [
  [397, 200, 387, 200, 828, 0], [414, 240, 300, 240, 303, 1], [445, 240, 260, 240, 290, 0],
  [460, 276, 357, 250, 399, 0], [475, 333, 417, 321, 815, 1], [490, 323, 450, 279, 501, 0],
  [507, 285, 447, 264, 447, 1], [522, 240, 285, 240, 357, 1], [537, 240, 262, 240, 288, 1],
  [552, 240, 262, 240, 318, 0], [568, 240, 321, 240, 324, 0], [584, 333, 411, 300, 456, 0],
  [598, 240, 378, 240, 399, 1], [630, 240, 279, 240, 324, 0], [645, 288, 312, 270, 312, 0],
  [662, 240, 315, 240, 315, 1], [677, 240, 300, 240, 366, 0], [691, 240, 300, 240, 300, 1],
  [706, 240, 312, 240, 333, 0], [723, 312, 378, 279, 399, 0], [738, 366, 387, 354, 483, 0],
  [753, 369, 459, 345, 459, 0], [770, 486, 615, 465, 615, 0], [785, 648, 669, 531, 729, 0],
  [799, 441, 627, 430, 627, 1], [816, 411, 437, 384, 461, 1], [831, 366, 471, 366, 471, 0],
  [846, 417, 459, 400, 516, 1], [861, 360, 414, 345, 433, 1], [878, 345, 372, 342, 423, 1],
  [893, 330, 354, 324, 390, 1], [908, 336, 411, 336, 411, 0], [924, 402, 408, 342, 420, 0],
  [939, 351, 390, 342, 408, 1], [954, 291, 348, 288, 378, 1], [971, 273, 300, 264, 315, 1],
  [986, 267, 282, 264, 288, 0], [1001, 240, 279, 240, 291, 1], [1018, 270, 330, 267, 330, 0],
  [1033, 330, 336, 306, 336, 0], [1047, 330, 339, 318, 366, 0], [1062, 306, 330, 300, 330, 1],
  [1079, 303, 369, 303, 381, 0], [1094, 300, 369, 294, 372, 1]
];

const averages = [
  ["#4fb5b9", "747,264 770,290 785,306 816,328 832,339 846,344 870,345 893,350 924,359 954,354 1018,358 1050,355 1080,360 1110,362"],
  ["#5aa83c", "487,264 500,282 520,297 537,299 552,285 568,290 588,312 605,308 630,298 645,285 660,268 677,255 706,262 725,290 739,290 753,312 770,355 785,387 800,401 816,425 832,450 846,457 861,459 885,454 908,446 924,420 940,397 960,378 980,352 1001,330 1018,328 1050,325 1070,310 1094,304 1110,313"],
  ["#c24e4e", "445,264 455,285 472,279 480,290 490,320 498,330 522,333 537,306 552,288 568,270 584,290 600,293 630,298 648,298 660,270 677,255 706,264 723,288 738,315 753,360 770,440 785,497 800,513 816,517 832,520 846,480 861,418 878,398 908,372 939,366 954,360 971,345 986,315 1001,290 1018,288 1033,297 1050,307 1062,310"]
];

// [x, end of the bar, colour]
const histogram = [
  [283, 961, "g"], [303, 957, "g"], [321, 949, "g"], [340, 941, "g"], [358, 939, "g"], [376, 943, "lg"],
  [394, 951, "lg"], [412, 939, "g"], [431, 941, "lg"], [449, 962, "lg"], [468, 995, "r"], [487, 1009, "r"],
  [506, 1009, "lr"], [524, 1007, "lr"], [543, 1023, "r"], [561, 1027, "r"], [579, 1027, "lr"], [597, 1034, "r"],
  [617, 1036, "r"], [635, 1025, "lr"], [652, 1007, "lr"], [673, 998, "lr"], [690, 995, "lr"], [708, 989, "lr"],
  [728, 977, "lr"], [746, 975, "lr"], [764, 963, "g"], [784, 951, "g"], [802, 945, "g"], [821, 945, "g"],
  [839, 943, "g"], [857, 939, "g"], [875, 943, "lg"], [894, 957, "lg"], [912, 963, "lg"], [931, 970, "r"],
  [948, 995, "r"], [968, 1000, "r"], [986, 979, "lr"], [1003, 957, "g"], [1022, 948, "g"], [1041, 948, "lg"]
];

const barColors = { g: "#45997f", lg: "#a9d6c9", r: "#c8696a", lr: "#f0b8b8" };

const signals = [
  ["#4396ec", "283,999 303,993 321,985 345,966 370,953 385,950 405,951 430,937 443,934 468,966 480,990 494,1018 533,1036 550,1065 588,1099 622,1141 643,1146 663,1136 685,1137 700,1141 717,1139 735,1129 755,1129 768,1125 790,1108 807,1094 828,1089 845,1082 862,1071 885,1068 903,1082 937,1092 957,1122 976,1137 995,1117 1031,1084 1060,1105"],
  ["#d8691e", "283,1000 325,996 360,984 410,970 438,960 462,959 500,976 530,990 560,1012 590,1040 622,1073 650,1092 680,1107 717,1118 755,1122 790,1118 830,1108 870,1093 900,1089 935,1089 960,1096 980,1105 1000,1108 1030,1102 1060,1102"]
];

function line(points, color) {
  return `<polyline points="${points}" fill="none" stroke="${color}" stroke-width="1.5" vector-effect="non-scaling-stroke"/>`;
}

document.getElementById("candles").innerHTML =
  candles.map(([x, top, bottom, high, low, rising]) => {
    const color = rising ? "#5fa48c" : "#ba4e4e";
    return `<path d="M${x - 1} ${high}h2V${low}h-2z" fill="${color}"/>` +
      `<rect x="${x - 7.5}" y="${top}" width="15" height="${bottom - top}" fill="${color}"/>`;
  }).join("") +
  averages.map(([color, points]) => line(points, color)).join("") +
  '<ellipse cx="1109" cy="333" rx="11" ry="16" fill="#ba4e4e"/>';

document.getElementById("macd").innerHTML =
  histogram.map(([x, end, key]) =>
    `<rect x="${x}" y="${Math.min(966, end)}" width="16" height="${Math.abs(966 - end)}" fill="${barColors[key]}"/>`
  ).join("") +
  signals.map(([color, points]) => line(points, color)).join("");
```
